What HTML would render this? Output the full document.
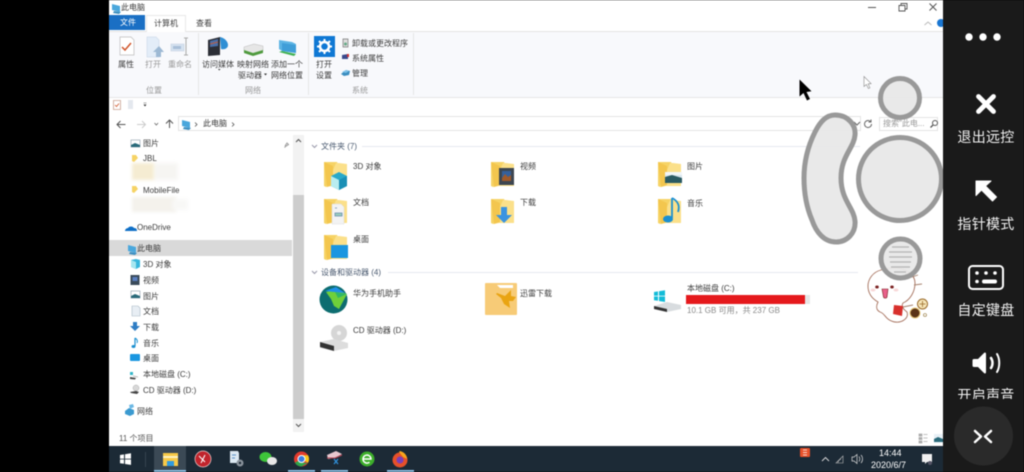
<!DOCTYPE html>
<html><head><meta charset="utf-8"><style>
html,body{margin:0;padding:0;width:1024px;height:472px;overflow:hidden;background:#000}
#w{position:relative;width:1024px;height:472px;overflow:hidden;background:#000;filter:blur(.4px);font-family:"Liberation Sans","Noto Sans CJK SC",sans-serif}
.a{position:absolute}
.t{position:absolute;white-space:nowrap;font-size:8px;line-height:12px;height:12px;color:#3c3c3c;margin-top:.8px}
.g{color:#999}
.r{position:absolute;left:945.5px;width:81px;text-align:center;color:#f2f2f2;font-size:14px;line-height:18px;letter-spacing:.3px;white-space:nowrap}
svg{position:absolute;left:0;top:0}
</style></head><body><div id="w">
<div class="a" style="left:109px;top:0;width:834px;height:446px;background:#fff"></div>
<div class="a" style="left:109px;top:31px;width:834px;height:66px;background:#f8f9fc"></div>
<div class="a" style="left:109px;top:97px;width:834px;height:1px;background:#e6e6e6"></div>
<div class="a" style="left:109px;top:15px;width:36px;height:15px;background:#1a6fc4"></div>
<div class="a" style="left:146px;top:15px;width:40px;height:17px;background:#fff;border:1px solid #e8e8e8;border-bottom:0;box-sizing:border-box"></div>
<div class="a" style="left:109px;top:31px;width:37px;height:1px;background:#e4e4e4"></div>
<div class="a" style="left:186px;top:31px;width:757px;height:1px;background:#e4e4e4"></div>
<div class="a" style="left:198px;top:33px;width:1px;height:62px;background:#e6e6e6"></div>
<div class="a" style="left:308px;top:33px;width:1px;height:62px;background:#e6e6e6"></div>
<div class="a" style="left:413px;top:33px;width:1px;height:62px;background:#e6e6e6"></div>
<div class="a" style="left:178px;top:116px;width:683px;height:15px;border:1px solid #e4e4e4;box-sizing:border-box"></div>
<div class="a" style="left:879px;top:117px;width:59px;height:14px;border:1px solid #e4e4e4;box-sizing:border-box"></div>
<div class="a" style="left:109px;top:240px;width:183px;height:16px;background:#d9d9d9"></div>
<div class="a" style="left:293px;top:135px;width:11px;height:297px;background:#f2f2f2"></div>
<div class="a" style="left:293px;top:195px;width:11px;height:224px;background:#cdcdcd"></div>
<div class="a" style="left:154px;top:163px;width:24px;height:17px;background:#f6f5f2;filter:blur(2px)"></div>
<div class="a" style="left:132px;top:163px;width:22px;height:17px;background:#f5ecd2;filter:blur(1.5px)"></div>
<div class="a" style="left:132px;top:197px;width:44px;height:15px;background:#f4f2ec;filter:blur(1.500px)"></div>
<div class="a" style="left:172px;top:199px;width:16px;height:11px;background:#f8f8f6;filter:blur(2px)"></div>
<div class="a" style="left:385px;top:146px;width:475px;height:1px;background:#e6e9f0"></div>
<div class="a" style="left:362px;top:146px;width:24px;height:1px;background:#e6e9f0"></div>
<div class="a" style="left:388px;top:272px;width:470px;height:1px;background:#e6e9f0"></div>
<div class="a" style="left:687px;top:295px;width:123px;height:9px;background:#e6e6e6"></div>
<div class="a" style="left:686px;top:295px;width:119px;height:9px;background:#e5191c"></div>

<div class="a" style="left:109px;top:446px;width:834px;height:26px;background:#1c2a36"></div>
<div class="a" style="left:154px;top:446px;width:32px;height:26px;background:#3b4955"></div>
<div class="a" style="left:154px;top:470px;width:32px;height:2px;background:#8cc0e4"></div>
<div class="a" style="left:288px;top:470px;width:27px;height:2px;background:#8cc0e4"></div>
<div class="a" style="left:321px;top:470px;width:27px;height:2px;background:#8cc0e4"></div>
<div class="a" style="left:387px;top:470px;width:27px;height:2px;background:#8cc0e4"></div>
<div class="a" style="left:145px;top:452px;width:1px;height:15px;background:#35434f"></div>

<span class="t" style="left:121px;top:1px">此电脑</span>
<span class="t" style="left:120px;top:16px;color:#fff">文件</span>
<span class="t" style="left:154px;top:17px">计算机</span>
<span class="t" style="left:196px;top:17px">查看</span>
<span class="t" style="left:118px;top:58px">属性</span>
<span class="t g" style="left:145px;top:58px">打开</span>
<span class="t g" style="left:168px;top:58px">重命名</span>
<span class="t g" style="left:146px;top:84px">位置</span>
<span class="t" style="left:202px;top:58px">访问媒体</span>
<span class="t" style="left:237px;top:58px">映射网络</span>
<span class="t" style="left:238px;top:69px">驱动器</span>
<span class="t" style="left:271px;top:58px">添加一个</span>
<span class="t" style="left:271px;top:69px">网络位置</span>
<span class="t g" style="left:245px;top:84px">网络</span>
<span class="t" style="left:316px;top:58px">打开</span>
<span class="t" style="left:316px;top:69px">设置</span>
<span class="t" style="left:352px;top:37px">卸载或更改程序</span>
<span class="t" style="left:352px;top:52px">系统属性</span>
<span class="t" style="left:352px;top:67px">管理</span>
<span class="t g" style="left:352px;top:84px">系统</span>
<span class="t" style="left:203px;top:117px">此电脑</span>
<span class="t g" style="left:883px;top:117px">搜索"此电...</span>

<span class="t" style="left:143px;top:137px">图片</span>
<span class="t" style="left:143px;top:152px">JBL</span>
<span class="t" style="left:143px;top:184px">MobileFile</span>
<span class="t" style="left:137px;top:221px">OneDrive</span>
<span class="t" style="left:137px;top:242px">此电脑</span>
<span class="t" style="left:143px;top:258px">3D 对象</span>
<span class="t" style="left:143px;top:274px">视频</span>
<span class="t" style="left:143px;top:290px">图片</span>
<span class="t" style="left:143px;top:305px">文档</span>
<span class="t" style="left:143px;top:321px">下载</span>
<span class="t" style="left:143px;top:337px">音乐</span>
<span class="t" style="left:143px;top:352px">桌面</span>
<span class="t" style="left:143px;top:368px">本地磁盘 (C:)</span>
<span class="t" style="left:143px;top:384px">CD 驱动器 (D:)</span>
<span class="t" style="left:137px;top:405px">网络</span>
<span class="t" style="left:119px;top:432px;color:#555">11 个项目</span>

<span class="t" style="left:321px;top:140px;color:#4a5a70">文件夹 (7)</span>
<span class="t" style="left:353px;top:160px">3D 对象</span>
<span class="t" style="left:520px;top:160px">视频</span>
<span class="t" style="left:687px;top:160px">图片</span>
<span class="t" style="left:353px;top:196px">文档</span>
<span class="t" style="left:520px;top:196px">下载</span>
<span class="t" style="left:687px;top:197px">音乐</span>
<span class="t" style="left:353px;top:233px">桌面</span>
<span class="t" style="left:321px;top:266px;color:#4a5a70">设备和驱动器 (4)</span>
<span class="t" style="left:353px;top:287px">华为手机助手</span>
<span class="t" style="left:520px;top:287px">迅雷下载</span>
<span class="t" style="left:687px;top:282px">本地磁盘 (C:)</span>
<span class="t" style="left:687px;top:304px;color:#888">10.1 GB 可用，共 237 GB</span>
<span class="t" style="left:353px;top:324px">CD 驱动器 (D:)</span>

<span class="t" style="left:879px;top:446px;color:#fff;font-size:9px;width:18px;text-align:center">14:44</span>
<span class="t" style="left:871px;top:458px;color:#fff;font-size:9px">2020/6/7</span>

<svg width="1024" height="472" viewBox="0 0 1024 472" fill="none">
<defs>
<g id="fd"><path d="M0 2h13l1 2v19l-12 4-2-1z" fill="#f6d365"/><path d="M12 3h3l8 1v22H8l-6 1z" fill="#fbe08a"/><path d="M0 2l3 25 6-2V6z" fill="#f3c64e"/></g>
<g id="pc"><path d="M1 1l8 2v6l-8-2z" fill="#4aa7dc"/><path d="M3 8l7 1-2 2-6-1z" fill="#3b8ec0"/></g>
</defs>
<use href="#pc" x="111" y="3"/>
<path d="M120 37h11l3 3v15h-14z" fill="#fff" stroke="#bbb" stroke-width=".7"/><path d="M122 47l3 3 6-7" stroke="#d0552a" stroke-width="1.5"/>
<path d="M147 37h9l3 3v17h-12z" fill="#e3edf8" stroke="#cfdcec" stroke-width=".7"/><path d="M159 46l5 6h-3v5h-5v-5h-3z" fill="#9db9d4"/>
<path d="M171 44h13v7h-13z" fill="#d5e2f0" stroke="#c3d0df" stroke-width=".6"/><path d="M173 46h8v3h-8z" fill="#a9bfd8"/><path d="M186 38v17M184 38h4M184 55h4" stroke="#aaa"/>
<path d="M208 40l12-3v18l-12 1z" fill="#2b2e36"/><path d="M210 41l8-2v7l-8 1z" fill="#4a6fa8"/><path d="M210 44l8-2" stroke="#c25a3c"/><path d="M220 37c5 1 8 5 8 8s-3 5-7 4z" fill="#2f8fd4"/>
<path d="M244 47l10-3 9 2v5l-10 3-9-3z" fill="#e6e6e6" stroke="#bbb" stroke-width=".5"/><path d="M244 50l9 3 10-3v3l-10 3-9-3z" fill="#4f9a3e"/>
<path d="M279 40l13 2 4 2v9l-14-2-3-2z" fill="#5cb4e4"/><path d="M282 43l14 2v8l-14-2z" fill="#3f9ed8"/><path d="M279 52l15 4 2-2-14-3z" fill="#3fb152"/>
<rect x="314" y="36" width="21" height="21" fill="#0f78d4"/><circle cx="324.500" cy="46.500" r="4.500" stroke="#fff" stroke-width="2.500"/><path d="M324.500 39v3M324.500 51v3M317 46.500h3M329 46.500h3M319 41l2 2M328 50l2 2M330 41l-2 2M321 50l-2 2" stroke="#fff" stroke-width="2"/>
<path d="M343 39h5v8h-5z" fill="#ddd" stroke="#777" stroke-width=".7"/><circle cx="345.500" cy="44" r="1.500" fill="#6a8"/>
<path d="M342 55l6-1v5h-6z" fill="#3a4a8c"/><path d="M347 54h2v3h-2z" fill="#c33"/>
<path d="M341 74l5-4 4 1-1 4-5 1z" fill="#3b8ec0"/><path d="M342 72l4-2 3 1-3 2z" fill="#7cc0e8"/>
<path d="M113.500 100.500h7v9h-7z" stroke="#c9a090" stroke-width=".8" fill="#fff"/><path d="M115 105l1.500 1.500 2.500-3" stroke="#d0552a" stroke-width=".8"/>
<rect x="128" y="100" width="5" height="9" fill="#e4e8ee"/><path d="M143.500 104.500h3l-1.500 2z" fill="#333"/><path d="M143.500 103h3" stroke="#555" stroke-width=".5"/>
<path d="M218 69h2.500l-1.250 1.500z" fill="#333"/><path d="M264 73.500h3l-1.500 2z" fill="#333"/>
<path d="M125.500 124.500h-8M120.500 121l-3.500 3.500 3.500 3.500" stroke="#555"/>
<path d="M137 124.500h8M142 121l3.500 3.500-3.500 3.500" stroke="#ccc"/>
<path d="M154.500 123l1.800 2 1.800-2" stroke="#666" stroke-width=".8"/>
<path d="M169.500 128v-8M166 123.500l3.500-3.500 3.500 3.500" stroke="#555"/>
<use href="#pc" x="181" y="119"/>
<path d="M195 122.500l2 2-2 2M232 122.500l2 2-2 2" stroke="#555" stroke-width=".8"/>
<path d="M854 122l3 3 3-3" stroke="#666"/>
<path d="M871.500 124a3.500 3.500 0 1 1-1.200-2.600M871 119.500v2.500h-2.500" stroke="#666"/>
<circle cx="935" cy="123" r="2.500" stroke="#555"/><path d="M933 125l-2.500 2.500" stroke="#555" stroke-width="1.300"/>
<path d="M868 7.500h8" stroke="#555"/><path d="M899 5.500h6v5.500h-6zM901 5.500v-2h6v5.500h-2" stroke="#555" stroke-width=".9"/>
<path d="M929.500 3.500l7 7M936.500 3.500l-7 7" stroke="#555"/>
<path d="M924.500 25l3.500-3 3.500 3" stroke="#bbb"/><circle cx="941" cy="23" r="4" fill="#1976d2"/>
<rect x="131" y="140" width="9" height="7" fill="#fff" stroke="#8a9aa8" stroke-width=".6"/><path d="M131 145l4-2 5 2v2h-9z" fill="#2a6a7a"/>
<path d="M132 155h4l2 3-4 4-2-1z" fill="#f6d365"/><path d="M132 186h4l2 3-4 4-2-1z" fill="#f6d365"/>
<path d="M125 231c0-2 2-3 3-3 1-2 5-2 6 0 2 0 3 1 3 3z" fill="#0f6fc6"/>
<use href="#pc" x="127" y="244"/>
<path d="M131 260l5-1 4 1v7l-4 2-5-2z" fill="#37b6dc"/><path d="M131 260l5 2v7l-5-2z" fill="#a7e6f0"/>
<rect x="130.500" y="275" width="9" height="10" fill="#3a4a5a"/><rect x="132.500" y="277" width="5" height="4" fill="#5a7fc0"/>
<rect x="131" y="291" width="9" height="7" fill="#fff" stroke="#8a9aa8" stroke-width=".6"/><path d="M131 296l4-2 5 2v2h-9z" fill="#2a6a7a"/>
<path d="M132 306h6l2 2v8h-8z" fill="#e8eef4" stroke="#a8b8c4" stroke-width=".6"/>
<path d="M133 322h4v4h3l-5 5-5-5h3z" fill="#2f7dc4"/>
<path d="M135 338v8" stroke="#1b8fd0" stroke-width="1.200"/><ellipse cx="133.500" cy="346.500" rx="2" ry="1.500" fill="#1b8fd0"/><path d="M135 338c2 1 3 3 2 5" stroke="#1b8fd0"/>
<rect x="130" y="354" width="10" height="7" rx="1" fill="#1a96e0"/>
<path d="M130 372h3v3h-3z" fill="#34b6c8"/><path d="M130 377l6 1-1 1.500-5-.5z" fill="#444"/><path d="M133 376l5 1" stroke="#bbb"/>
<circle cx="136" cy="388" r="3" fill="#d8d8d8" stroke="#aaa" stroke-width=".5"/><path d="M130 392l6-1 3 1-2 2-6-1z" fill="#444"/>
<path d="M125 411l4-3 5 2v4l-4 2-5-2z" fill="#3b9ad0"/><path d="M129 405l4-1 1 3-4 2z" fill="#6cb8e4"/>
<path d="M285 146l2-3 1.500 1.500-3 2-1 1" stroke="#999"/>
<path d="M296 142l2.500-2.500 2.500 2.500M296 424l2.500 2.500 2.500-2.500" stroke="#555"/>
<path d="M312 145l2.500 2.500 2.500-2.500M312 271l2.500 2.500 2.500-2.500" stroke="#99a"/>
<use href="#fd" x="324" y="160"/><use href="#fd" x="491" y="160"/><use href="#fd" x="658" y="160"/>
<use href="#fd" x="324" y="197"/><use href="#fd" x="491" y="197"/><use href="#fd" x="658" y="197"/><use href="#fd" x="324" y="233"/>
<path d="M331 176l8-4 8 4v10l-8 4-8-4z" fill="#29a9c9"/><path d="M331 176l8 4v10l-8-4z" fill="#b9edf0"/><path d="M339 180l8-4v10l-8 4z" fill="#1a8fb5"/>
<rect x="499" y="168" width="15" height="17" fill="#3d4650"/><rect x="502" y="171" width="9" height="10" fill="#35609c"/><path d="M502 178l3-4 3 3 3-2v6h-9z" fill="#a05a2a"/>
<path d="M665 172h17v11h-17z" fill="#d8e6ee"/><path d="M665 177l7-2 10 3v5h-17z" fill="#2a5a62"/><path d="M665 172h17v3h-17z" fill="#f2f6f8"/>
<path d="M332 204h9l3 3v17h-12z" fill="#f3f3f3" stroke="#ddd" stroke-width=".5"/><path d="M335 208l2 0M335 213h7v3h-7z" fill="#9cb" stroke="#6a8fb0" stroke-width=".8"/>
<path d="M501 207h6v8h5l-8 8-8-8h5z" fill="#3a93e0"/>
<path d="M672 198v20" stroke="#1b8fd0" stroke-width="1.800"/><path d="M672 198c6 3 8 8 6 14" stroke="#1b8fd0" stroke-width="1.800"/><ellipse cx="668" cy="219" rx="5" ry="3.500" fill="#1b8fd0"/>
<rect x="331" y="245" width="17" height="13" fill="#1a96e0"/>
<circle cx="333.500" cy="299.500" r="14" fill="#0d6d70"/><path d="M326 292l9-2 12 4-8 15-5-3-3-7z" fill="#6fd03a"/><path d="M325 291l11-4 9 6-11-1z" fill="#1e90e8"/><path d="M335 292l12 2-9 4z" fill="#2fb868"/>
<rect x="485" y="283" width="32" height="32" rx="1" fill="#f7cb77"/><path d="M497 285h16v3h-13z" fill="#fff"/><path d="M497 293l8 3 6-6v6l5 1-3 4-4 0 1 7-6-4-3-6-5-4z" fill="#e9a413"/>
<path d="M654 292l4-.6v4.300h-4zM659 291.200l6-1v5.500h-6zM654 296.500h4v4.300l-4-.6zM659 296.500h6v5.500l-6-1z" fill="#13bcd8"/>
<path d="M654 306l13-4 14 3v4l-14 3-13-3z" fill="#d8dcdf"/><path d="M654 306v3l13 3v-3z" fill="#333"/>
<circle cx="339" cy="333" r="8" fill="#d6d6d6"/><circle cx="339" cy="333" r="2" fill="#f4f4f4"/><path d="M320 342l14-3 14 4v5l-14 3-14-3z" fill="#ddd"/><path d="M320 342l14 4v5l-14-4z" fill="#333"/>
<path d="M919 434h3v2h-3zM919 437.500h3v2h-3zM919 441h3v2h-3zM923.500 434.500h4M923.500 438h4M923.500 441.500h4" fill="#aaa" stroke="#aaa" stroke-width=".7"/>
<rect x="934" y="434" width="9" height="9" fill="#e8f0f6"/><path d="M934 439l4-2 5 2v3h-9z" fill="#2a6a7a"/>
<path d="M120 455l4-.6v4.300h-4zM125 454.200l6-.9v5.400h-6zM120 459.500h4v4.300l-4-.6zM125 459.500h6v5.400l-6-.9z" fill="#fff"/>
<path d="M163 453h15v13h-15z" fill="#f7c948"/><path d="M163 456h15v2h-15z" fill="#fff2c0"/><path d="M167 461h7v5h-7z" fill="#2f9be0"/>
<circle cx="203" cy="459" r="8" fill="#c0242c" stroke="#f0d0d0" stroke-width=".7"/><path d="M199 456l6 6M205 455l-4 8" stroke="#fff"/>
<path d="M230 451h8l1 2v10h-9z" fill="#dce8f2"/><path d="M232 455h4M232 458h3" stroke="#5a90c8"/><circle cx="240" cy="463" r="3.500" fill="#8a939c"/><circle cx="240" cy="463" r="1.200" fill="#1c2a36"/>
<ellipse cx="265.500" cy="457" rx="6" ry="5" fill="#3ec43a"/><ellipse cx="272" cy="461" rx="5" ry="4" fill="#e8e8e8"/>
<circle cx="301.500" cy="459" r="7.500" fill="#e33b2e"/><path d="M301.500 459l-6.500 3.700a7.500 7.500 0 0 0 6.500 3.800z" fill="#2ea64a"/><path d="M301.500 459l6.500 3.700a7.500 7.500 0 0 0 0-7.400h-6.500z" fill="#f8c51b"/><path d="M295 462.700l6.500 3.800 6.500-3.800z" fill="#2ea64a"/><circle cx="301.500" cy="459" r="3.500" fill="#3b7de0" stroke="#fff"/>
<path d="M327 455l9-4 6 3-7 4-7 1z" fill="#e8c8d0"/><path d="M327 458l8 0 7-3" stroke="#b04050"/><path d="M334 459l4 5M338 459l-4 5" stroke="#2f8fd8" stroke-width="1.300"/>
<circle cx="367" cy="459" r="7.500" fill="#3dae2b"/><path d="M363 459h8a4 4 0 1 0-1.500 3.200" stroke="#fff" stroke-width="1.500"/>
<circle cx="400" cy="460" r="7.500" fill="#e6502a"/><path d="M400 451c4 1 7 4 7 8l-4-2-4-5z" fill="#f8a61c"/><circle cx="400" cy="460" r="3.500" fill="#7a3fb8"/>
<rect x="800" y="448" width="10" height="9" rx="1" fill="#e8512a"/><path d="M803 450h4M803 452.500h4M803 455h4" stroke="#fff" stroke-width=".8"/>
<path d="M822 461l3.500-3.500 3.500 3.500" stroke="#ddd" stroke-width=".9"/>
<path d="M836 463l7-7v7zM838 463c0-2 1-3 3-4" stroke="#bbb" stroke-width=".6"/>
<path d="M852 457h2l3-2.500v9l-3-2.500h-2z" stroke="#ddd" stroke-width=".7"/><path d="M859 456.500c1 1.500 1 3.500 0 5M861 455c2 2 2 6 0 8" stroke="#ddd" stroke-width=".7"/>
<path d="M922 454h10v8h-5l-2 2v-2h-3z" fill="#f0f0f0"/><circle cx="930" cy="463" r="2" fill="#556"/>
<path d="M799.500 79.500v17l4-3.500 3.500 7.500 3-1.500-3.500-7 5-.7z" fill="#000"/>
<path d="M864 76.500v10l2.400-2 2 4 1.500-.7-1.800-3.900 3-.3z" fill="#fff" stroke="#888" stroke-width=".6"/>
<!-- sticker -->
<path d="M881 270C873 272 868 279 868 286C868 292 871 298 878 302C876 306 876 310 880 312C884 313 885 317 888 319C893 323 900 323 904 320C907 318 908 315 907 312C903 309 901 306 903 303C910 300 915 292 915 283C915 274 905 268 895 268C890 268 885 268 881 270Z" fill="#fff" stroke="#a5705c" stroke-width=".9"/>
<path d="M914 285l8-1M909 278l9-3M903 307l10-2M905 274l7-3" stroke="#a5806c" stroke-width=".9"/>
<ellipse cx="877" cy="287" rx="1.800" ry="1.500" fill="#7a2020"/><ellipse cx="892" cy="287" rx="1.800" ry="1.500" fill="#7a2020"/>
<ellipse cx="873" cy="290" rx="2.500" ry="1.500" fill="#f8d8d8"/><ellipse cx="896" cy="290" rx="2.500" ry="1.500" fill="#f8d8d8"/>
<path d="M882 289h6l-1 8c-.5 1.500-3 1.500-3.500 0z" fill="#e8608a" stroke="#7a2020" stroke-width=".6"/>
<path d="M894 305l9 1-1 10-9-2z" fill="#d8302c"/>
<circle cx="922.500" cy="304" r="5" fill="#f6e6b8" stroke="#9a6a2a"/><path d="M919.500 304h6M922.500 301v6" stroke="#9a6a2a" stroke-width=".8"/>
<circle cx="915" cy="313" r="5" fill="#5a3318" stroke="#e8c878"/><circle cx="925" cy="315" r="1.500" fill="#fff" stroke="#8a6a2a" stroke-width=".6"/>
<!-- floating controls -->
<g fill="#e8e8e8" fill-opacity=".95" stroke="#999" stroke-width="5">
<circle cx="900" cy="98" r="19.500"/>
<circle cx="900" cy="179" r="41.500"/>
<circle cx="900.500" cy="258.500" r="19.500"/>
<path d="M835 115C848 115 856 125 855 135C854 148 841 156 841 178C841 200 854 208 855 221C856 233 847 242 836 242C824 242 816 232 812 220C806 206 804 192 804 178C804 160 809 144 815 132C820 122 826 115 835 115Z"/>
</g>
<path d="M892 247h17M889 252h23M889 257h23M890 262h21M891 267h19M894 272h12" stroke="#b5b5b5" stroke-width="1.300"/>
</svg>

<!-- right panel -->
<div class="a" style="left:943px;top:0;width:81px;height:472px;background:#1a1a1a"></div>
<div class="r" style="top:128px">退出远控</div>
<div class="r" style="top:215px">指针模式</div>
<div class="r" style="top:301px">自定键盘</div>
<div class="a" style="left:943px;top:386px;width:81px;height:13px;overflow:hidden"><div class="r" style="left:2.5px;top:0">开启声音</div></div>
<svg width="1024" height="472" viewBox="0 0 1024 472" fill="none">
<circle cx="969" cy="37" r="3.700" fill="#fff"/><circle cx="983" cy="37" r="3.700" fill="#fff"/><circle cx="997" cy="37" r="3.700" fill="#fff"/>
<path d="M978.500 96.500l15 15M993.500 96.500l-15 15" stroke="#fff" stroke-width="4.800" stroke-linecap="round"/>
<path d="M976 181h15l-5.500 5 11 11-4 4-11-11-5.500 5.500z" fill="#fff" stroke="#fff" stroke-linejoin="round"/>
<rect x="969" y="266" width="34" height="23" rx="3.500" stroke="#fff" stroke-width="2"/>
<circle cx="977" cy="273" r="1.800" fill="#fff"/><circle cx="986" cy="273" r="1.800" fill="#fff"/><circle cx="995" cy="273" r="1.800" fill="#fff"/>
<circle cx="977" cy="281.500" r="1.800" fill="#fff"/><rect x="982" y="279.500" width="15" height="4" rx="2" fill="#fff"/>
<path d="M974 359h4l6-6c1-1 2-.5 2 1v18c0 1.500-1 2-2 1l-6-6h-4c-1 0-1.500-.5-1.500-1.500v-5c0-1 .5-1.500 1.500-1.500z" fill="#fff"/>
<path d="M991 358c2 3 2 7 0 10" stroke="#fff" stroke-width="2.500" stroke-linecap="round"/><path d="M997 354c3 5 3 13 0 18" stroke="#fff" stroke-width="2" stroke-linecap="round"/>
<circle cx="983.500" cy="436" r="29.500" fill="#2a2a2a"/>
<path d="M975 431l6 5.500-6 5.500M991 431l-6 5.500 6 5.500" stroke="#fff" stroke-width="2.500" stroke-linecap="round" stroke-linejoin="round"/>
</svg>
</div></body></html>
